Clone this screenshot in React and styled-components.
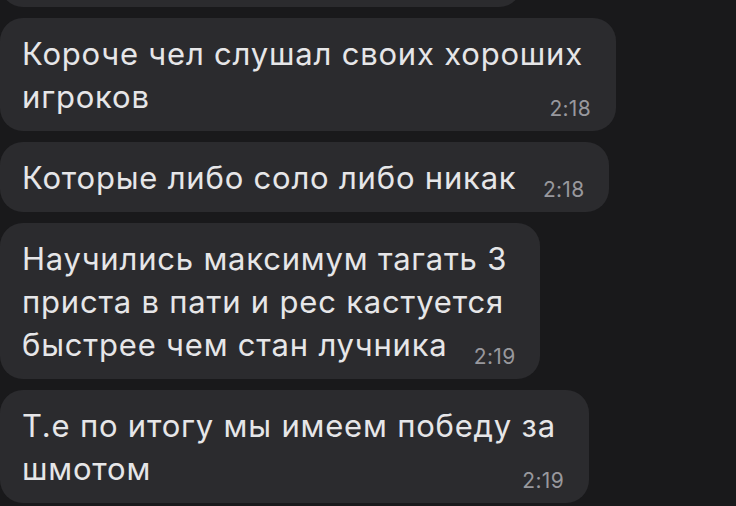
import React from "react";
import styled, { createGlobalStyle } from "styled-components";

const Global = createGlobalStyle`
  html, body { margin: 0; padding: 0; background: #19191b; }
  #root { width: 736px; height: 506px; }
`;

const Page = styled.div`
  width: 736px;
  height: 506px;
  overflow: hidden;
  box-sizing: border-box;
  background: #19191b;
  display: flex;
  flex-direction: column;
  justify-content: flex-end;
  align-items: flex-start;
  gap: 11px;
  padding-bottom: 3px;
  font-family: Inter, Roboto, "Noto Sans", sans-serif;
`;

const Bubble = styled.div`
  position: relative;
  flex: none;
  box-sizing: border-box;
  background: #2b2b2e;
  border-radius: 23px;
  padding: 14px 33px 13px 22px;
`;

const Stub = styled(Bubble)`
  width: 522px;
  height: 60px;
  padding: 0;
`;

const Text = styled.div`
  color: #e6e6e8;
  font-size: 31px;
  line-height: 43px;
  letter-spacing: 0.8px;
  white-space: nowrap;
`;

const Spacer = styled.span`
  display: inline-block;
  width: ${(p) => p.$w}px;
  height: 1px;
`;

const Time = styled.span`
  position: absolute;
  right: 25px;
  bottom: 12px;
  font-size: 21px;
  line-height: 21px;
  letter-spacing: 0.3px;
  color: #98989d;
`;

const messages = [
  { lines: ["Короче чел слушал своих хороших", "игроков"], time: "2:18" },
  { lines: ["Которые либо соло либо никак"], time: "2:18" },
  {
    lines: [
      "Научились максимум тагать 3",
      "приста в пати и рес кастуется",
      "быстрее чем стан лучника",
    ],
    time: "2:19",
  },
  { lines: ["Т.е по итогу мы имеем победу за", "шмотом"], time: "2:19" },
];

export default function App() {
  return (
    <>
      <Global />
      <Page>
        <Stub />
        {messages.map((m, i) => (
          <Bubble key={i}>
            <Text>
              {m.lines.map((l, j) => (
                <React.Fragment key={j}>
                  {j > 0 && <br />}
                  {l}
                </React.Fragment>
              ))}
              <Spacer $w={60} />
            </Text>
            <Time>{m.time}</Time>
          </Bubble>
        ))}
      </Page>
    </>
  );
}
